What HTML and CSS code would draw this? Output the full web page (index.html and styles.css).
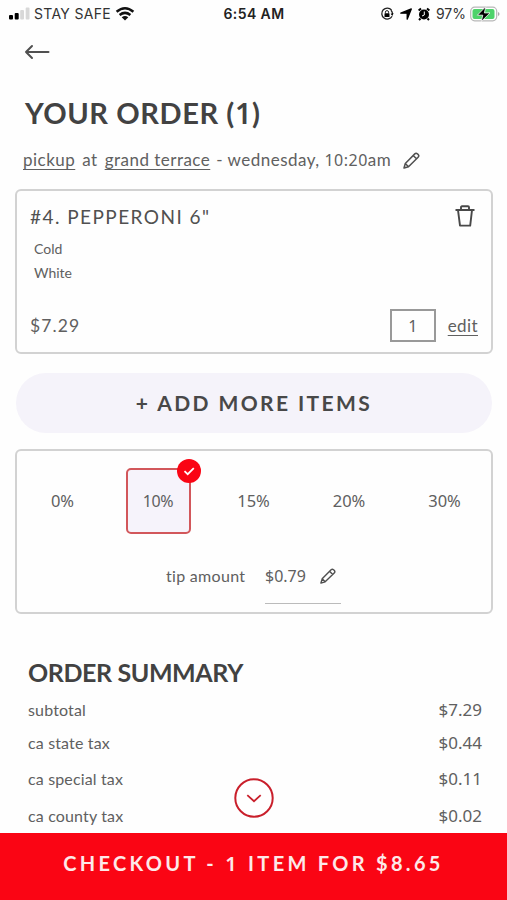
FILE: index.html
```html
<!DOCTYPE html>
<html lang="en">
<head>
<meta charset="utf-8">
<title>Your Order</title>
<link rel="stylesheet" href="styles.css">
</head>
<body>
<main class="screen">
  <div class="status">
    <div class="status-left">
      <svg width="24" height="16" viewBox="0 0 24 16"><rect x="1" y="9" width="4" height="4.500" rx="1"/><rect x="6.700" y="7" width="4" height="6.500" rx="1"/><rect x="12.200" y="4" width="3.800" height="9.500" rx="1" fill="#d8d8d8"/><rect x="17.700" y="1.500" width="3.800" height="12" rx="1" fill="#d8d8d8"/></svg>
      <span class="carrier">STAY SAFE</span>
      <svg width="20" height="16" viewBox="0 0 20 16"><g fill="none" stroke="#111" stroke-width="2.500"><path d="M1.600 5.700Q10-1.300 18.400 5.700"/><path d="M4.600 9Q10 4.700 15.400 9"/></g><path d="M6.700 11.300Q10 8.600 13.300 11.300L10 14.600Z" fill="#111"/></svg>
    </div>
    <span class="clock">6:54 AM</span>
    <div class="status-right">
      <svg width="14" height="14" viewBox="0 0 14 14"><path d="M11.500 3A5.500 5.500 0 1 0 12.100 9.200M12.500 7A5.500 5.500 0 0 0 11 3.200" fill="none" stroke="#222" stroke-width="1.300"/><path d="M13.600 6.300L12.300 9 10.600 6.700Z"/><rect x="4.500" y="6.300" width="5" height="3.700" rx=".6"/><path d="M5.400 6.700V5.200a1.600 1.600 0 0 1 3.200 0v1.500" fill="none" stroke="#222" stroke-width="1"/></svg>
      <svg class="arrow" width="12" height="12" viewBox="0 0 12 12"><path d="M11.300.9L7.200 11.200V5.200H.800Z" stroke="#000" stroke-linejoin="round" stroke-width="1.300"/></svg>
      <svg width="12" height="14" viewBox="0 0 12 14"><circle cx="6" cy="7.500" r="5"/><path d="M.600 3.500L3 1.400M11.400 3.500L9 1.400M2.500 11.500L1 13M9.500 11.500L11 13" stroke="#000" stroke-width="2"/><path d="M6.300 4.500V8L4 9" fill="none" stroke="#fff" stroke-width="1"/></svg>
      <span class="percent">97%</span>
      <svg width="30" height="16" viewBox="0 0 30 16"><rect x=".7" y="1.200" width="26" height="13.600" rx="4" fill="#fff" stroke="#b8b8b8" stroke-width="1.200"/><rect x="2.500" y="3" width="22" height="10" rx="2" fill="#4ed36b"/><path d="M28 6v4q1.500-.6 1.500-2T28 6" fill="#aaa"/><path d="M15.800.6L7.400 9.200h5.400L11.200 15.600 20 6.900h-5.600Z" stroke="#fff" stroke-width=".8"/></svg>
    </div>
  </div>

  <nav class="nav">
    <svg width="26" height="16" viewBox="0 0 26 16" fill="none" stroke="#505050" stroke-width="2" stroke-linecap="round" stroke-linejoin="round"><path d="M24.500 8H2M8 2L2 8l6 6"/></svg>
  </nav>

  <h1 class="title">YOUR ORDER (<span class="num">1</span>)</h1>

  <div class="pickup">
    <p class="pickup-text"><u>pickup</u><span class="at">at</span><u>grand terrace</u><span class="when">- wednesday, <span class="num">10:20</span>am</span></p>
    <svg width="17" height="17" viewBox="0 0 17 17" fill="none" stroke="#505050" stroke-width="1.500" stroke-linejoin="round"><path d="M1 16L2.300 11.500 11.800 1.900Q13 .7 14.400 1.800L15.200 2.600Q16.400 3.900 15.100 5.200L5.500 14.700ZM10.200 3.500L13.500 6.800M2.300 11.500L5.500 14.700"/></svg>
  </div>

  <section class="card item">
    <div class="item-head">
      <h2 class="item-name">#4. PEPPERONI 6"</h2>
      <svg width="20" height="22" viewBox="0 0 20 22" fill="none" stroke="#484848" stroke-width="1.900" stroke-linejoin="round"><path d="M.500 5H19.500M3 5.200L5 20.600H15.200L17 5.200M6 4.800V2.300Q6 1.300 7 1.300H13Q14 1.300 14 2.300V4.800"/></svg>
    </div>
    <ul class="options"><li>Cold</li><li>White</li></ul>
    <div class="item-foot">
      <span class="price">$7.29</span>
      <span class="qty num">1</span>
      <u class="edit">edit</u>
    </div>
  </section>

  <button class="add">+ ADD MORE ITEMS</button>

  <section class="card tips">
    <div class="tip-row">
      <div class="tip num">0%</div>
      <div class="tip num selected">10%
        <svg class="badge" width="24" height="24" viewBox="0 0 24 24"><circle cx="12" cy="12" r="12" fill="#fa0514"/><path d="M7.500 12.200L10.700 15.200 16.800 9.200" fill="none" stroke="#fff" stroke-width="1.800"/></svg>
      </div>
      <div class="tip num">15%</div>
      <div class="tip num">20%</div>
      <div class="tip num">30%</div>
    </div>
    <div class="tip-amount">
      <span class="tip-label">tip amount</span>
      <div class="tip-field">
        <span class="num">$0.79</span>
        <svg width="16" height="16" viewBox="0 0 17 17" fill="none" stroke="#505050" stroke-width="1.500" stroke-linejoin="round"><path d="M1 16L2.300 11.500 11.800 1.900Q13 .7 14.400 1.800L15.200 2.600Q16.400 3.900 15.100 5.200L5.500 14.700ZM10.200 3.500L13.500 6.800M2.300 11.500L5.500 14.700"/></svg>
      </div>
    </div>
  </section>

  <section class="summary">
    <h2 class="summary-title">ORDER SUMMARY</h2>
    <dl class="lines">
      <dt>subtotal</dt><dd class="num">$7.29</dd>
      <dt>ca state tax</dt><dd class="num">$0.44</dd>
      <dt>ca special tax</dt><dd class="num">$0.11</dd>
      <dt>ca county tax</dt><dd class="num">$0.02</dd>
    </dl>
    <svg class="more" width="40" height="40" viewBox="0 0 40 40" fill="#fff" stroke="#c91f2b" stroke-width="2"><circle cx="20" cy="20" r="18.700"/><path d="M13.300 17.200L20 23.200 26.700 17.200" fill="none" stroke-width="1.800"/></svg>
  </section>

  <footer class="checkout"><span>CHECKOUT - <span class="num">1</span> ITEM FOR $8.65</span></footer>
</main>
</body>
</html>
```

FILE: styles.css
```css
* { box-sizing: border-box; margin: 0; padding: 0; }
body { background: #fefefe; color: #606060; font-family: Lato, "Liberation Sans", sans-serif; overflow: hidden; }
svg { display: block; flex: none; }
p, h1, h2, span, u, li, dt, dd { white-space: nowrap; }
u { text-decoration-thickness: 1px; text-underline-offset: 3px; text-decoration-skip-ink: none; }
.num { font-family: "Noto Sans", "Open Sans", sans-serif; }
.screen { width: 507px; height: 900px; display: flex; flex-direction: column; }

.status { height: 27px; padding: 0 7px 0 8px; display: grid; grid-template-columns: 1fr auto 1fr; align-items: center; font-family: Inter, sans-serif; color: #333; font-size: 14px; }
.status-left, .status-right { display: flex; align-items: center; }
.status-left { gap: 4px; }
.carrier { margin-left: -2px; letter-spacing: 0.3px; }
.clock { font-weight: 600; letter-spacing: 0.4px; color: #222; }
.status-right { justify-content: flex-end; gap: 6px; }
.percent { letter-spacing: 0; }
.status-right svg:last-child { margin-left: -2px; }

.nav { height: 49px; padding: 17px 0 0 24px; }
.title { height: 72px; padding-left: 25px; font-size: 29px; line-height: 73px; font-weight: 700; letter-spacing: 0.6px; color: #424242; }
.title .num { font-weight: 600; }
.pickup { height: 24px; padding-left: 23px; display: flex; align-items: center; gap: 12px; }
.pickup-text { font-size: 17px; line-height: 24px; letter-spacing: 0.48px; }
.pickup .num { font-size: 16px; }
.at { margin: 0 7px; }
.when { margin-left: 6px; }

.card { width: 478px; margin-left: 15px; border: 2px solid #d2d2d2; border-radius: 6px; flex: none; }
.item { height: 165px; margin-top: 17px; padding: 12px 13px 0 13px; }
.item-head { display: flex; justify-content: space-between; padding-right: 3px; }
.item-head svg { margin-top: 2px; }
.item-name { font-size: 19px; line-height: 27px; height: 28px; font-weight: 400; letter-spacing: 1.45px; color: #505050; }
.options { padding: 6px 0 0 4px; list-style: none; font-size: 14px; line-height: 24px; }
.item-foot { display: flex; align-items: center; margin-top: 24px; height: 33px; }
.price { font-size: 17.500px; letter-spacing: 1.1px; flex: 1; }
.qty { width: 46px; height: 33px; border: 2px solid #999; font-size: 16px; line-height: 31px; text-align: center; margin-right: 12px; }
.edit { font-size: 17px; letter-spacing: 0.4px; }

.add { width: 476px; height: 60px; margin: 19px 0 0 16px; padding-bottom: 1px; border: 0; border-radius: 30px; background: #f5f3fa; color: #484848; font: 700 21px Lato, sans-serif; letter-spacing: 2.4px; flex: none; }

.tips { height: 165px; margin-top: 16px; }
.tip-row { display: grid; grid-template-columns: repeat(5, 65px); gap: 30.500px; padding: 17px 0 0 13px; }
.tip { height: 66px; font-size: 16.500px; line-height: 66px; text-align: center; }
.selected { position: relative; border: 2px solid #d2575b; border-radius: 5px; background: #f6f3fb; line-height: 62px; font-size: 16px; letter-spacing: -0.3px; }
.badge { position: absolute; right: -12px; top: -11px; }
.tip-amount { display: flex; margin: 25px 0 0 149px; font-size: 16px; line-height: 34px; }
.tip-label { width: 99px; letter-spacing: 0.3px; }
.tip-field { width: 76px; height: 45px; border-bottom: 1px solid #bbb; display: flex; align-items: flex-start; gap: 14px; }
.tip-field svg { margin-top: 9px; }

.summary { position: relative; padding: 40px 25px 0 28px; height: 219px; flex: none; }
.summary-title { font-size: 25px; line-height: 36px; font-weight: 700; letter-spacing: -0.4px; color: #424242; }
.lines { display: grid; grid-template-columns: 1fr auto; grid-template-rows: 38px 29px 42px 32px; align-items: center; font-size: 16px; letter-spacing: 0.15px; }
.lines dd { font-size: 17px; letter-spacing: 0; }
.more { position: absolute; left: 234px; top: 164px; }

.checkout { height: 67px; background: #fa0514; color: #fde9e9; display: flex; justify-content: center; font-size: 20px; line-height: 60px; font-weight: 700; letter-spacing: 3.3px; flex: none; }
.checkout .num { font-weight: 600; }
```
